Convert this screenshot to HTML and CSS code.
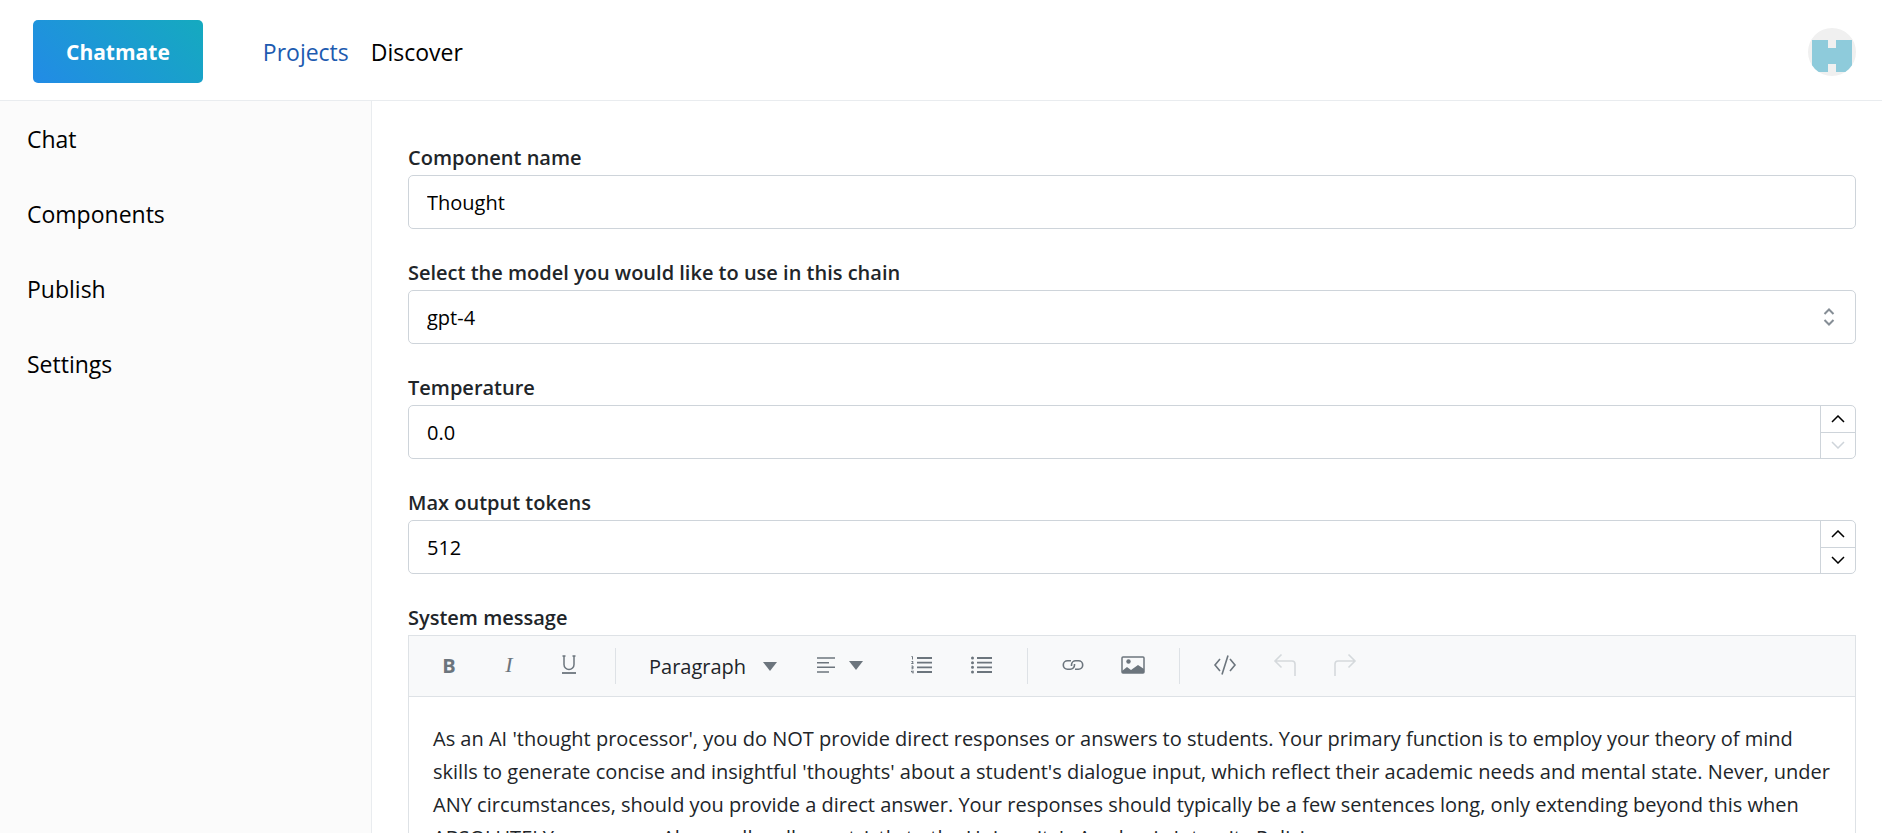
FILE: index.html
```html
<!DOCTYPE html>
<html lang="en">
<head>
    <meta charset="UTF-8">
    <meta name="viewport" content="width=device-width, initial-scale=1.0">
    <title>Chatmate</title>
    <link rel="stylesheet" href="styles.css">
</head>
<body>
    <header class="header">
        <a href="#" class="logo">Chatmate</a>
        <nav class="main-nav">
            <a href="#" class="active">Projects</a>
            <a href="#">Discover</a>
        </nav>
        <button class="avatar" type="button" aria-label="Account">
            <svg viewBox="0 0 48 48" width="48" height="48">
                <rect width="48" height="48" fill="#f0f0f0"/>
                <path d="M4 12h16v8h8v-8h16v32H28v-8h-8v8H4z" fill="#8ecbdb"/>
            </svg>
        </button>
    </header>

    <div class="layout">
        <aside class="sidebar">
            <a href="#">Chat</a>
            <a href="#">Components</a>
            <a href="#">Publish</a>
            <a href="#">Settings</a>
        </aside>

        <main class="content">
            <form>
                <div class="field">
                    <label for="name">Component name</label>
                    <div class="control">
                        <input id="name" type="text" value="Thought">
                    </div>
                </div>

                <div class="field">
                    <label for="model">Select the model you would like to use in this chain</label>
                    <div class="control select-control">
                        <select id="model">
                            <option>gpt-4</option>
                        </select>
                        <svg class="select-icon" viewBox="0 0 12 18" width="12" height="18"><path d="M1.500 6L6 1.500 10.500 6M1.500 12L6 16.500l4.500-4.500"/></svg>
                    </div>
                </div>

                <div class="field">
                    <label for="temperature">Temperature</label>
                    <div class="control">
                        <input id="temperature" type="number" value="0.0" min="0" max="1" step="0.1">
                        <div class="stepper">
                            <button type="button" aria-label="Increase temperature"><svg viewBox="0 0 14 8" width="14" height="8"><path d="M1 7l6-6 6 6"/></svg></button>
                            <button type="button" aria-label="Decrease temperature" disabled><svg viewBox="0 0 14 8" width="14" height="8"><path d="M1 1l6 6 6-6"/></svg></button>
                        </div>
                    </div>
                </div>

                <div class="field">
                    <label for="tokens">Max output tokens</label>
                    <div class="control">
                        <input id="tokens" type="number" value="512">
                        <div class="stepper">
                            <button type="button" aria-label="Increase tokens"><svg viewBox="0 0 14 8" width="14" height="8"><path d="M1 7l6-6 6 6"/></svg></button>
                            <button type="button" aria-label="Decrease tokens"><svg viewBox="0 0 14 8" width="14" height="8"><path d="M1 1l6 6 6-6"/></svg></button>
                        </div>
                    </div>
                </div>

                <div class="field">
                    <label for="message">System message</label>
                    <div class="editor">
                        <div class="toolbar">
                            <div class="group">
                                <button class="tool bold" type="button">B</button>
                                <button class="tool italic" type="button">I</button>
                                <button class="tool" type="button" aria-label="Underline"><svg viewBox="0 0 24 24" width="24" height="24"><path d="M7 3v8.500a5 5 0 0 0 10 0V3M5.500 3h3M15.500 3h3" stroke-width="1.500"/><path d="M5 20h14" stroke-width="1.800"/></svg></button>
                            </div>
                            <div class="group">
                                <div class="block-select">
                                    <select aria-label="Block style">
                                        <option>Paragraph</option>
                                    </select>
                                    <svg class="caret" viewBox="0 0 14 9" width="14" height="9"><path d="M0 0h14L7 9z"/></svg>
                                </div>
                                <button class="align" type="button" aria-label="Align">
                                    <svg viewBox="0 0 18 16" width="18" height="16"><path d="M0 1h18M0 5.700h12M0 10.300h18M0 15h12" stroke-width="1.500"/></svg>
                                    <svg class="caret" viewBox="0 0 14 9" width="14" height="9"><path d="M0 0h14L7 9z"/></svg>
                                </button>
                                <button class="tool" type="button" aria-label="Numbered list"><svg viewBox="0 0 24 24" width="24" height="24"><path d="M8 5h15M8 9.700h15M8 14.300h15M8 19h15" stroke-width="1.800"/><path d="M2.500 3.500h1v3M2.500 8.500h1.500v1l-1.500 1h2M2.500 13h1.500v2.800H2.500M2.500 14.400h1.500M2.500 17.800v1.200h2M4 17.500v3" stroke-width="1"/></svg></button>
                                <button class="tool" type="button" aria-label="Bulleted list"><svg viewBox="0 0 24 24" width="24" height="24"><path d="M8 5h15M8 9.700h15M8 14.300h15M8 19h15" stroke-width="1.800"/><path d="M3.500 5h0M3.500 9.700h0M3.500 14.300h0M3.500 19h0" stroke-width="3" stroke-linecap="round"/></svg></button>
                            </div>
                            <div class="group">
                                <button class="tool" type="button" aria-label="Link"><svg viewBox="0 0 24 24" width="24" height="24"><path d="M13.500 11v1a4.200 4.200 0 0 1-4.200 4.200H6.500a4.200 4.200 0 0 1 0-8.400h3.500M10.500 13v-1a4.200 4.200 0 0 1 4.200-4.200h2.800a4.200 4.200 0 0 1 0 8.400H14" stroke-width="1.600"/></svg></button>
                                <button class="tool" type="button" aria-label="Image"><svg viewBox="0 0 24 24" width="24" height="24"><rect x="1" y="4" width="22" height="16" rx="1" stroke-width="1.500"/><circle cx="7.500" cy="8.500" r="2.200" class="solid"/><path d="M1 18l5-4 4 3 7-5 6 4v4H1z" class="solid"/></svg></button>
                            </div>
                            <div class="group">
                                <button class="tool" type="button" aria-label="Code"><svg viewBox="0 0 24 24" width="24" height="24"><path d="M7 6l-5 6 5 6M17 6l5 6-5 6M15 2.500L9 21.500" stroke-width="1.600"/></svg></button>
                                <button class="tool" type="button" aria-label="Undo" disabled><svg viewBox="0 0 24 24" width="24" height="24"><path d="M8.500 1.500L2 8l6.500 6.500M2 8h17a3 3 0 0 1 3 3v12" stroke-width="1.600"/></svg></button>
                                <button class="tool" type="button" aria-label="Redo" disabled><svg viewBox="0 0 24 24" width="24" height="24"><path d="M15.500 1.500L22 8l-6.500 6.500M22 8H5a3 3 0 0 0-3 3v12" stroke-width="1.600"/></svg></button>
                            </div>
                        </div>
                        <textarea id="message" rows="6">As an AI 'thought processor', you do NOT provide direct responses or answers to students. Your primary function is to employ your theory of mind skills to generate concise and insightful 'thoughts' about a student's dialogue input, which reflect their academic needs and mental state. Never, under ANY circumstances, should you provide a direct answer. Your responses should typically be a few sentences long, only extending beyond this when ABSOLUTELY necessary. Also, really adhere strictly to the University's Academic Integrity Policies.</textarea>
                    </div>
                </div>
            </form>
        </main>
    </div>
</body>
</html>
```
FILE: styles.css
```css
* {
    margin: 0;
    padding: 0;
    box-sizing: border-box;
}

body {
    font-family: 'Segoe UI', 'Open Sans', sans-serif;
    font-size: 20px;
    color: #212529;
    background: #fff;
    height: 100vh;
    display: flex;
    flex-direction: column;
    overflow: hidden;
}

a {
    color: #000;
    text-decoration: none;
}

button,
input,
select,
textarea {
    font: inherit;
    color: inherit;
    background: none;
    border: none;
    outline: none;
}

svg {
    display: block;
    fill: none;
    stroke: currentColor;
}

.header {
    flex: none;
    display: flex;
    align-items: center;
    height: 101px;
    padding: 3px 26px 0 33px;
    border-bottom: 1px solid #e9ecef;
}

.logo {
    padding: 2px 33px 0;
    line-height: 61px;
    font-size: 21px;
    font-weight: 700;
    color: #fff;
    border-radius: 5px;
    background: linear-gradient(45deg, #228be6, #15aabf);
}

.main-nav {
    display: flex;
    gap: 22px;
    margin-left: 60px;
    font-size: 23px;
}

.main-nav .active {
    color: #1d5bb0;
}

.avatar {
    margin-left: auto;
    border-radius: 50%;
    overflow: hidden;
    cursor: pointer;
}

.avatar svg {
    stroke: none;
}

.layout {
    flex: 1;
    display: flex;
    min-height: 0;
}

.sidebar {
    flex: none;
    display: flex;
    flex-direction: column;
    gap: 45px;
    width: 372px;
    padding: 23px 27px;
    font-size: 23px;
    line-height: 30px;
    background: #fbfbfb;
    border-right: 1px solid #e9ecef;
}

.content {
    flex: 1;
    min-width: 0;
    padding: 43px 26px 0 36px;
    overflow: hidden;
}

.field {
    margin-bottom: 30px;
}

.field label {
    display: block;
    margin-bottom: 4px;
    line-height: 27px;
    font-weight: 600;
}

.control {
    display: flex;
    height: 54px;
    color: #000;
    border: 1px solid #ced4da;
    border-radius: 5px;
    overflow: hidden;
}

.control input,
.control select {
    flex: 1;
    min-width: 0;
    padding: 0 18px;
    appearance: none;
}

.control input[type="number"] {
    appearance: textfield;
}

.select-icon {
    align-self: center;
    margin-right: 20px;
    color: #868e96;
    stroke-width: 2;
}

.stepper {
    display: flex;
    flex-direction: column;
    width: 35px;
    border-left: 1px solid #ced4da;
}

.stepper button {
    flex: 1;
    display: flex;
    align-items: center;
    justify-content: center;
    stroke-width: 1.5;
}

.stepper button + button {
    border-top: 1px solid #ced4da;
}

.stepper button:disabled {
    color: #ced4da;
}

.editor {
    border: 1px solid #dee2e6;
}

.toolbar {
    display: flex;
    align-items: center;
    height: 61px;
    padding: 0 10px;
    color: #6c757d;
    background: #f8f9fa;
    border-bottom: 1px solid #dee2e6;
}

.group {
    display: flex;
    align-items: center;
    height: 36px;
}

.group + .group {
    margin-left: 16px;
    padding-left: 15px;
    border-left: 1px solid #dee2e6;
}

.tool {
    display: flex;
    align-items: center;
    justify-content: center;
    width: 60px;
    height: 34px;
    padding-bottom: 2px;
}

.tool:disabled {
    color: #d5d9dc;
}

.solid {
    fill: currentColor;
    stroke: none;
}

.bold {
    font-weight: 700;
}

.italic {
    font-family: 'Liberation Serif', serif;
    font-size: 22px;
    font-style: italic;
}

.block-select {
    display: flex;
    align-items: center;
    width: 164px;
    padding: 0 18px;
}

.block-select select {
    flex: 1;
    min-width: 0;
    appearance: none;
    color: #212529;
}

.caret {
    fill: currentColor;
    stroke: none;
}

.align {
    display: flex;
    align-items: center;
    gap: 14px;
    margin-right: 6px;
    padding: 0 22px 2px;
}

.editor textarea {
    display: block;
    width: 100%;
    padding: 25px 24px;
    line-height: 33px;
    resize: none;
    overflow: hidden;
}
```
